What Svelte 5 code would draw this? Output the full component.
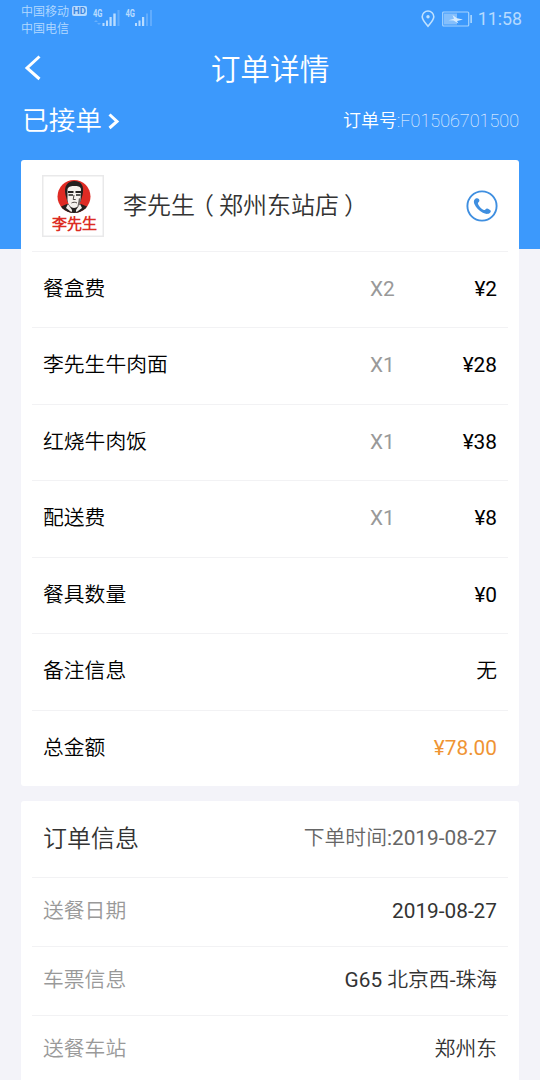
<script lang="ts">
  /**
   * Order detail page: status bar, order header, dish list and delivery info.
   */

  interface OrderItem {
    name: string;
    count?: number;
    value: string;
    highlight?: boolean;
  }

  interface InfoRow {
    label: string;
    value: string;
  }

  const orderNo = 'F01506701500';

  const items: OrderItem[] = [
    { name: '餐盒费', count: 2, value: '¥2' },
    { name: '李先生牛肉面', count: 1, value: '¥28' },
    { name: '红烧牛肉饭', count: 1, value: '¥38' },
    { name: '配送费', count: 1, value: '¥8' },
    { name: '餐具数量', value: '¥0' },
    { name: '备注信息', value: '无' },
    { name: '总金额', value: '¥78.00', highlight: true },
  ];

  const info: InfoRow[] = [
    { label: '送餐日期', value: '2019-08-27' },
    { label: '车票信息', value: 'G65 北京西-珠海' },
    { label: '送餐车站', value: '郑州东' },
  ];
</script>

<div class="page">
  <header>
    <div class="status-bar">
      <div class="carriers">
        <div class="carrier">中国移动<span class="hd">HD</span></div>
        <div class="carrier">中国电信</div>
      </div>
      <svg class="signals" width="62" height="20" viewBox="0 0 62 20" fill="#b9dcff">
        <text x="0" y="9" class="net" textLength="9.500" lengthAdjust="spacingAndGlyphs">4G</text>
        <g opacity="0.35">
          <path d="M1 14l2-2 2 2zM4 15l2 2 2-2z" />
        </g>
        <rect x="9.500" y="15" width="2" height="3" />
        <rect x="13" y="12.500" width="2" height="5.500" />
        <rect x="16.500" y="9" width="2.200" height="9" />
        <rect x="20.300" y="5.500" width="2.400" height="12.500" />
        <rect x="24.500" y="2" width="2" height="16" opacity="0.3" />
        <text x="32.500" y="9" class="net" textLength="9.500" lengthAdjust="spacingAndGlyphs">4G</text>
        <rect x="42" y="15" width="2" height="3" />
        <rect x="45.500" y="12.500" width="2" height="5.500" />
        <rect x="49" y="9" width="2.200" height="9" />
        <rect x="53" y="5.500" width="2" height="12.500" opacity="0.3" />
        <rect x="57" y="2" width="2" height="16" opacity="0.3" />
      </svg>
      <div class="status-right">
        <svg width="14" height="18" viewBox="0 0 14 18" fill="none" stroke="#c0e2ff" stroke-width="1.600">
          <path d="M7 16.300C4.800 13.500 1.200 10.100 1.200 6.800a5.800 5.800 0 0 1 11.600 0c0 3.300-3.600 6.700-5.800 9.500z" />
          <circle cx="7" cy="6.800" r="1.700" fill="#c0e2ff" stroke="none" />
        </svg>
        <svg class="battery" width="31" height="16" viewBox="0 0 31 16">
          <rect x="0.700" y="1" width="26" height="14" rx="1" fill="none" stroke="#a5d3fd" stroke-width="1.200" />
          <rect x="2" y="2.500" width="13" height="11" fill="#84bffc" />
          <path d="M6.500 9.200l5.500-1.400L10.500 4l4.500 3.200 6 1.200-6 1.500 1.500 2.600-5-3z" fill="#d4ebff" />
          <rect x="28.300" y="4" width="1.700" height="8" fill="#a5d3fd" />
        </svg>
        <span class="clock">11:58</span>
      </div>
    </div>

    <div class="title-bar">
      <svg class="back" width="20" height="26" viewBox="0 0 20 26" fill="none" stroke="#fff" stroke-width="3">
        <path d="M17.500 1.500L5 13l12.500 11" />
      </svg>
      <h1>订单详情</h1>
    </div>

    <div class="order-state">
      <span class="state">已接单</span>
      <svg class="more" width="14" height="18" viewBox="0 0 14 18" fill="none" stroke="#fff" stroke-width="3">
        <path d="M2.500 2.500l7.500 7-7.500 6.500" />
      </svg>
      <span class="order-no">订单号<span class="number">:{orderNo}</span></span>
    </div>
  </header>

  <section class="card">
    <div class="shop">
      <svg class="logo" width="62" height="62" viewBox="0 0 62 62">
        <rect x="0.750" y="0.750" width="60.500" height="60.500" fill="#fff" stroke="#e9e9ea" stroke-width="1.500" />
        <clipPath id="logo-disc"><circle cx="32" cy="21.500" r="16.500" /></clipPath>
        <circle cx="32" cy="21.500" r="16.500" fill="#df2b24" />
        <g clip-path="url(#logo-disc)">
          <path d="M15 43l3-11 7-3h14l7 3 4 11z" fill="#25201f" />
          <path d="M26 29l6 9 6-9 2 4-8 6-8-6z" fill="#f6f1ed" />
          <path d="M30.500 34h3l1.500 5h-6z" fill="#25201f" />
          <path d="M23.500 20c-2-9 2-14 9-14s10 5 8 14l-2 7H25.500z" fill="#25201f" />
          <path d="M25.500 14c1.500-3 4-3 7-3s5.500 0 6.500 3l-.5 11c-.5 5-3.500 8-6.500 8s-6-3-6.500-8z" fill="#f6f1ed" />
          <path d="M26 17h5.500M33.500 17H39" stroke="#25201f" stroke-width="1.800" />
          <path d="M26.500 20h4.500M34 20h4.500" stroke="#25201f" stroke-width="1.500" />
          <path d="M32 20l-.8 4.500h2.500M29.500 28c1.500-1 4-1 5.500 0" fill="none" stroke="#4b4442" />
          <path d="M37 23l1.700 1-1 5-2.200 2.500z" fill="#6b6260" />
        </g>
        <text x="32.500" y="53.500" text-anchor="middle" class="logo-text">李先生</text>
      </svg>
      <h2>李先生<span class="paren open">（</span>郑州东站店<span class="paren close">）</span></h2>
      <svg class="phone" width="32" height="32" viewBox="0 0 32 32">
        <circle cx="16" cy="16" r="14.600" fill="none" stroke="#3f8fe0" stroke-width="1.900" />
        <path
          d="M8.600 9.500c1-1.300 3.200-1.600 4.200-.5.900 1 .8 2.500-.3 3.300-.6.500-.8 1-.5 1.600 1 2.500 3.300 4.800 5.800 6 .7.300 1.200.1 1.600-.5.800-1.100 2.200-1.200 3.500-.2l1.400 1c.8.700.6 1.700-.2 2.500-1.500 1.500-4.300 1.600-7.300.1-3.800-1.900-6.800-5-8.300-8.500-.8-1.900-.9-3.500.1-4.800z"
          fill="#3f8fe0"
        />
      </svg>
    </div>
    {#each items as item (item.name)}
      <div class="row item">
        <span class="name">{item.name}</span>
        {#if item.count}
          <span class="count">X{item.count}</span>
        {/if}
        <span class="value" class:highlight={item.highlight}>{item.value}</span>
      </div>
    {/each}
  </section>

  <section class="card info-card">
    <div class="info-head">
      <h3>订单信息</h3>
      <span class="time">下单时间:2019-08-27</span>
    </div>
    {#each info as row (row.label)}
      <div class="row info">
        <span class="label">{row.label}</span>
        <span class="value">{row.value}</span>
      </div>
    {/each}
  </section>
</div>

<style>
  :global(body) {
    margin: 0;
    overflow: hidden;
  }

  .page {
    box-sizing: border-box;
    width: 540px;
    height: 1080px;
    overflow: hidden;
    background: linear-gradient(#3c99fc 249px, #f3f3f9 249px);
    font-family: Roboto, 'Noto Sans CJK SC DemiLight', 'Noto Sans CJK SC', sans-serif;
    font-size: 20.800px;
    font-weight: 400;
    color: #000;
  }

  header {
    height: 160px;
    color: #fff;
  }

  .status-bar {
    display: flex;
    height: 38px;
    padding: 0 18px 0 21px;
    color: #b5daff;
  }

  .carriers {
    width: 71px;
    padding-top: 2px;
  }

  .carrier {
    display: flex;
    align-items: center;
    height: 17px;
    font-size: 12px;
    white-space: nowrap;
  }

  .hd {
    margin-left: 3px;
    width: 15px;
    height: 10px;
    border-radius: 2px;
    background: #b5daff;
    color: #3c85dc;
    font-size: 9.500px;
    font-weight: 700;
    line-height: 10.500px;
    text-align: center;
  }

  .signals {
    margin: 8px 0 0 1px;
  }

  .net {
    font-size: 10.500px;
    font-weight: 700;
  }

  .status-right {
    display: flex;
    align-items: center;
    height: 37px;
    margin-left: auto;
  }

  .battery {
    margin: 0 5px 0 7px;
  }

  .clock {
    font-size: 17.800px;
    line-height: 20px;
  }

  .title-bar {
    display: grid;
    grid-template-columns: 60px 1fr 60px;
    align-items: center;
    height: 60px;
  }

  .back {
    margin-left: 22px;
  }

  h1,
  h2,
  h3 {
    margin: 0;
    font-weight: 400;
  }

  h1 {
    padding-bottom: 2px;
    font-size: 29.700px;
    text-align: center;
  }

  .order-state {
    display: flex;
    align-items: center;
    height: 44px;
    padding: 0 21px 0 22px;
  }

  .state {
    margin-right: 5px;
    padding-bottom: 4px;
    font-size: 26.700px;
  }

  .more {
    margin-top: 2px;
  }

  .order-no {
    margin-left: auto;
    padding-bottom: 3px;
    font-size: 18px;
  }

  .number {
    font-weight: 100;
  }

  .card {
    margin: 0 21px;
    padding: 0 11px;
    border-radius: 3px;
    background: #fff;
  }

  .shop {
    display: flex;
    align-items: center;
    box-sizing: border-box;
    height: 90.500px;
    padding: 1px 10px 0;
  }

  h2 {
    margin-left: 19px;
    color: #333;
    font-size: 24px;
    line-height: 30px;
    white-space: nowrap;
  }

  /* half-width brackets, centred in a full-width box */
  .paren {
    display: inline-block;
    box-sizing: border-box;
    width: 24px;
    font-feature-settings: 'halt';
  }

  .open {
    padding-left: 7px;
  }

  .close {
    padding-left: 5px;
  }

  .phone {
    margin-left: auto;
  }

  .logo-text {
    fill: #dc2c24;
    font-size: 15px;
    font-weight: 700;
  }

  .row {
    display: flex;
    align-items: baseline;
    box-sizing: border-box;
    padding: 0 11px;
    border-top: 1px solid #f2f2f4;
  }

  .item {
    height: 76.500px;
    line-height: 74px;
  }

  .name {
    flex: 1;
  }

  .count {
    width: 54px;
    color: #999;
  }

  .value {
    min-width: 73px;
    text-align: right;
    white-space: nowrap;
  }

  .highlight {
    color: #ef9433;
  }

  .info-card {
    margin-top: 15px;
  }

  .info-head {
    display: flex;
    align-items: center;
    justify-content: space-between;
    height: 76px;
    padding: 0 11px;
    color: #666;
  }

  h3 {
    color: #333;
    font-size: 24px;
    line-height: 76px;
  }

  .time {
    line-height: 72px;
    padding-bottom: 2px;
  }

  .info {
    height: 69px;
    justify-content: space-between;
    color: #333;
    line-height: 67px;
  }

  .label {
    color: #999;
  }
</style>
